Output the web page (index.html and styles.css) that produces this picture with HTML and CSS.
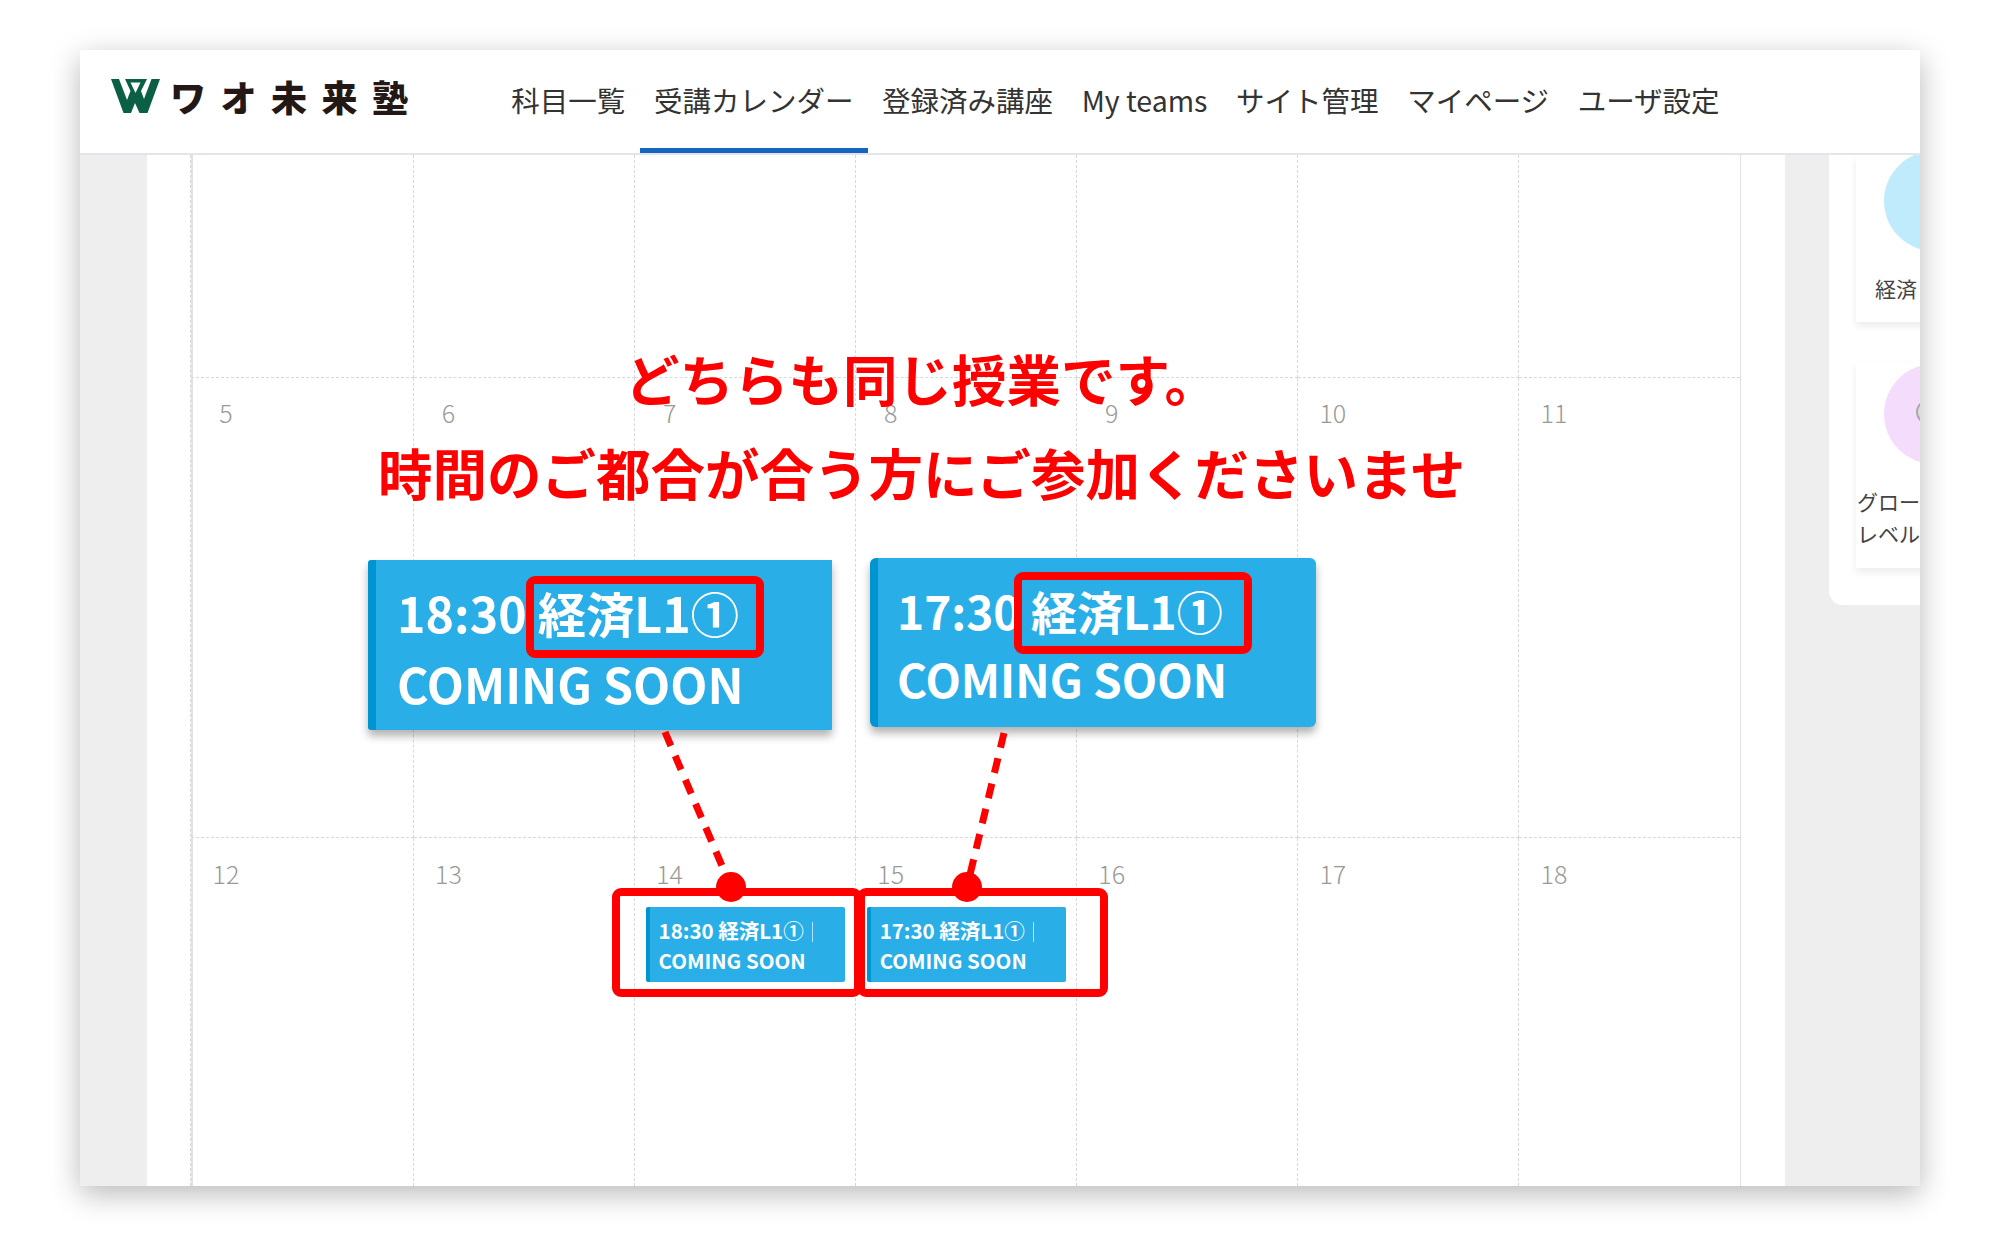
FILE: index.html
```html
<!DOCTYPE html>
<html lang="ja">

<head>
    <meta charset="utf-8">
    <title>受講カレンダー</title>
    <link rel="stylesheet" href="styles.css">
</head>

<body>
    <div class="window">
        <header class="topbar">
            <div class="logo">
                <svg class="logo-mark" viewBox="0 0 49 34">
                    <path d="M0 0H8L16 21L19.500 12L14 0H36L30 12L33 20L40.500 0H49L36.500 34H28.500L24 24L20 34H12.500ZM19.500 3.500L24.500 14L29.500 3.500Z" fill="#0b5f45" fill-rule="evenodd" />
                </svg>
                <span class="logo-text">ワオ未来塾</span>
            </div>
            <nav class="nav">
                <a class="nav-item">科目一覧</a>
                <a class="nav-item active">受講カレンダー</a>
                <a class="nav-item">登録済み講座</a>
                <a class="nav-item">My teams</a>
                <a class="nav-item">サイト管理</a>
                <a class="nav-item">マイページ</a>
                <a class="nav-item">ユーザ設定</a>
            </nav>
        </header>

        <main class="content">
            <div class="sheet">
                <div class="calendar">
                    <div class="cell"></div><div class="cell"></div><div class="cell"></div><div class="cell"></div><div class="cell"></div><div class="cell"></div><div class="cell"></div>

                    <div class="cell week"><div class="date">5</div></div>
                    <div class="cell week"><div class="date">6</div></div>
                    <div class="cell week"><div class="date">7</div></div>
                    <div class="cell week"><div class="date">8</div></div>
                    <div class="cell week"><div class="date">9</div></div>
                    <div class="cell week"><div class="date">10</div></div>
                    <div class="cell week"><div class="date">11</div></div>

                    <div class="cell last"><div class="date">12</div></div>
                    <div class="cell last"><div class="date">13</div></div>
                    <div class="cell last">
                        <div class="date">14</div>
                        <div class="event event-small">
                            <div>18:30 経済L1① <span class="bar"></span></div>
                            <div>COMING SOON</div>
                        </div>
                    </div>
                    <div class="cell last">
                        <div class="date">15</div>
                        <div class="event event-small">
                            <div>17:30 経済L1① <span class="bar"></span></div>
                            <div>COMING SOON</div>
                        </div>
                    </div>
                    <div class="cell last"><div class="date">16</div></div>
                    <div class="cell last"><div class="date">17</div></div>
                    <div class="cell last"><div class="date">18</div></div>
                </div>
            </div>

            <aside class="side">
                <div class="course course-one">
                    <div class="circle circle-blue"></div>
                    <p class="course-name">経済</p>
                </div>
                <div class="course course-two">
                    <div class="circle circle-pink"><div class="ring"></div></div>
                    <p class="course-name wide">グロー<br>レベル</p>
                </div>
            </aside>
        </main>

        <!-- annotations on top of the calendar -->
        <p class="note note-one">どちらも同じ授業です。</p>
        <p class="note note-two">時間のご都合が合う方にご参加くださいませ</p>

        <div class="event zoom zoom-a">
            <div>18:30 経済L1①</div>
            <div>COMING SOON</div>
        </div>
        <div class="event zoom zoom-b">
            <div>17:30 経済L1①</div>
            <div>COMING SOON</div>
        </div>

        <div class="mark mark-a"></div>
        <div class="mark mark-b"></div>
        <div class="mark mark-c"></div>
        <div class="mark mark-d"></div>

        <svg class="links" viewBox="0 0 1840 1136">
            <line x1="585" y1="682" x2="651" y2="837" />
            <line x1="924" y1="683" x2="887" y2="837" />
        </svg>
        <div class="dot dot-a"></div>
        <div class="dot dot-b"></div>
    </div>
</body>

</html>
```

FILE: styles.css
```css
html,
body {
    margin: 0;
    background: #fff;
}

body {
    padding: 50px 80px;
    font-family: "Noto Sans CJK JP", "Noto Sans", sans-serif;
    color: #333;
}

.window {
    position: relative;
    display: flex;
    flex-direction: column;
    height: 1136px;
    overflow: hidden;
    background: #eee;
    box-shadow: 0 8px 28px rgba(0, 0, 0, 0.28);
}

.topbar {
    display: flex;
    height: 105px;
    flex-shrink: 0;
    background: #fff;
    border-bottom: 2px solid #e2e6ea;
    box-sizing: border-box;
}

.logo {
    display: flex;
    align-items: flex-start;
    gap: 10px;
    width: 417px;
    padding: 29px 0 0 31px;
    box-sizing: border-box;
}

.logo-mark {
    width: 49px;
    height: 34px;
    flex-shrink: 0;
}

.logo-text {
    font-size: 36px;
    line-height: 34px;
    font-weight: 900;
    letter-spacing: 14.500px;
    white-space: nowrap;
    color: #231815;
}

.nav {
    display: flex;
    gap: 0;
}

.nav-item {
    padding: 0 14.300px;
    font-size: 28.500px;
    line-height: 100px;
    height: 103px;
    box-sizing: border-box;
    white-space: nowrap;
    color: #333;
}

.active {
    border-bottom: 5px solid #1565c0;
}

.content {
    display: flex;
    flex: 1;
    min-height: 0;
}

.sheet {
    flex-shrink: 0;
    width: 1638px;
    margin-left: 67px;
    padding: 0 44px 0 43px;
    box-sizing: border-box;
    background: #fff;
}

.calendar {
    display: grid;
    grid-template-columns: 222.500px repeat(6, minmax(0, 1fr));
    grid-template-rows: 223px 460px 1fr;
    height: 100%;
    border-left: 1px dashed #d8d8d8;
    border-right: 1px solid #dfe2ea;
    box-sizing: border-box;
}

.cell {
    border-right: 1px dashed #d8d8d8;
    border-bottom: 1px dashed #d8d8d8;
    box-sizing: border-box;
}

.cell:nth-child(7n) {
    border-right: none;
}

.cell:nth-child(7n+1) {
    border-left: 2px solid #dfe2ea;
}

.last {
    border-bottom: none;
}

.date {
    width: 70px;
    height: 69px;
    font-size: 25px;
    line-height: 70px;
    font-weight: 300;
    text-align: center;
    color: #999;
}

.week .date {
    line-height: 68px;
}

.cell:nth-child(7n+1) .date {
    width: 66px;
}

.event {
    box-sizing: border-box;
    background: #2aaee8;
    border-left: 8px solid #0095d0;
    color: #fff;
    font-weight: 700;
    white-space: nowrap;
}

.event-small {
    width: 199px;
    height: 75px;
    margin-left: 11px;
    padding: 8px 0 0 9px;
    border-left-width: 4px;
    border-radius: 2px;
    font-size: 20.500px;
    line-height: 30px;
}

.bar {
    display: inline-block;
    width: 1px;
    height: 20px;
    margin-left: 4px;
    vertical-align: -3px;
    background: #b5e2f8;
}

.side {
    flex: 1;
    min-width: 0;
    height: 450px;
    margin-left: 44px;
    padding-left: 27px;
    overflow: hidden;
    background: #fff;
    border-radius: 0 0 0 14px;
}

.course {
    position: relative;
    height: 206px;
    width: 200px;
    background: #fff;
    box-shadow: 0 4px 8px rgba(0, 0, 0, 0.08);
}

.course-one {
    height: 167px;
    margin-bottom: 40px;
}

.circle {
    position: absolute;
    left: 28px;
    width: 100px;
    height: 100px;
    border-radius: 50%;
}

.circle-blue {
    top: -4px;
    background: #c0ebfd;
}

.circle-pink {
    top: 2px;
    background: #f4dcfd;
}

.ring {
    position: absolute;
    left: 32px;
    top: 36px;
    width: 24px;
    height: 24px;
    border: 2px solid #aaa;
    border-radius: 50%;
    box-sizing: border-box;
    background: #ddd;
}

.course-name {
    position: absolute;
    top: 117px;
    left: 19px;
    margin: 0;
    font-size: 21px;
    line-height: 33px;
    color: #444;
    white-space: nowrap;
}

.course-two .course-name {
    top: 123px;
    line-height: 32px;
}

.wide {
    left: 1px;
}

.note {
    position: absolute;
    margin: 0;
    font-size: 54.500px;
    line-height: 70px;
    font-weight: 700;
    color: #f00;
    white-space: nowrap;
}

.note-one {
    left: 545px;
    top: 293px;
}

.note-two {
    left: 298px;
    top: 387px;
}

.zoom {
    position: absolute;
    box-shadow: 0 6px 8px rgba(0, 0, 0, 0.3);
}

.zoom-a {
    left: 288px;
    top: 510px;
    width: 464px;
    height: 170px;
    padding: 17px 0 0 21px;
    border-radius: 3px 0 0 3px;
    font-size: 48.300px;
    line-height: 71px;
}

.zoom-b {
    left: 790px;
    top: 508px;
    width: 446px;
    height: 169px;
    padding: 18px 0 0 19px;
    border-radius: 6px;
    font-size: 46px;
    line-height: 68px;
}

.mark {
    position: absolute;
    box-sizing: border-box;
    border: 8px solid #f00;
    border-radius: 9px;
}

.mark-a {
    left: 446px;
    top: 526px;
    width: 238px;
    height: 82px;
}

.mark-b {
    left: 934px;
    top: 522px;
    width: 238px;
    height: 82px;
}

.mark-c {
    left: 532px;
    top: 838px;
    width: 250px;
    height: 109px;
}

.mark-d {
    left: 777px;
    top: 838px;
    width: 251px;
    height: 109px;
}

.links {
    position: absolute;
    left: 0;
    top: 0;
    width: 1840px;
    height: 1136px;
    pointer-events: none;
}

.links line {
    stroke: #f00;
    stroke-width: 7;
    stroke-dasharray: 15 11;
}

.dot {
    position: absolute;
    top: 822px;
    width: 30px;
    height: 30px;
    border-radius: 50%;
    background: #f00;
}

.dot-a {
    left: 636px;
}

.dot-b {
    left: 872px;
}
```
